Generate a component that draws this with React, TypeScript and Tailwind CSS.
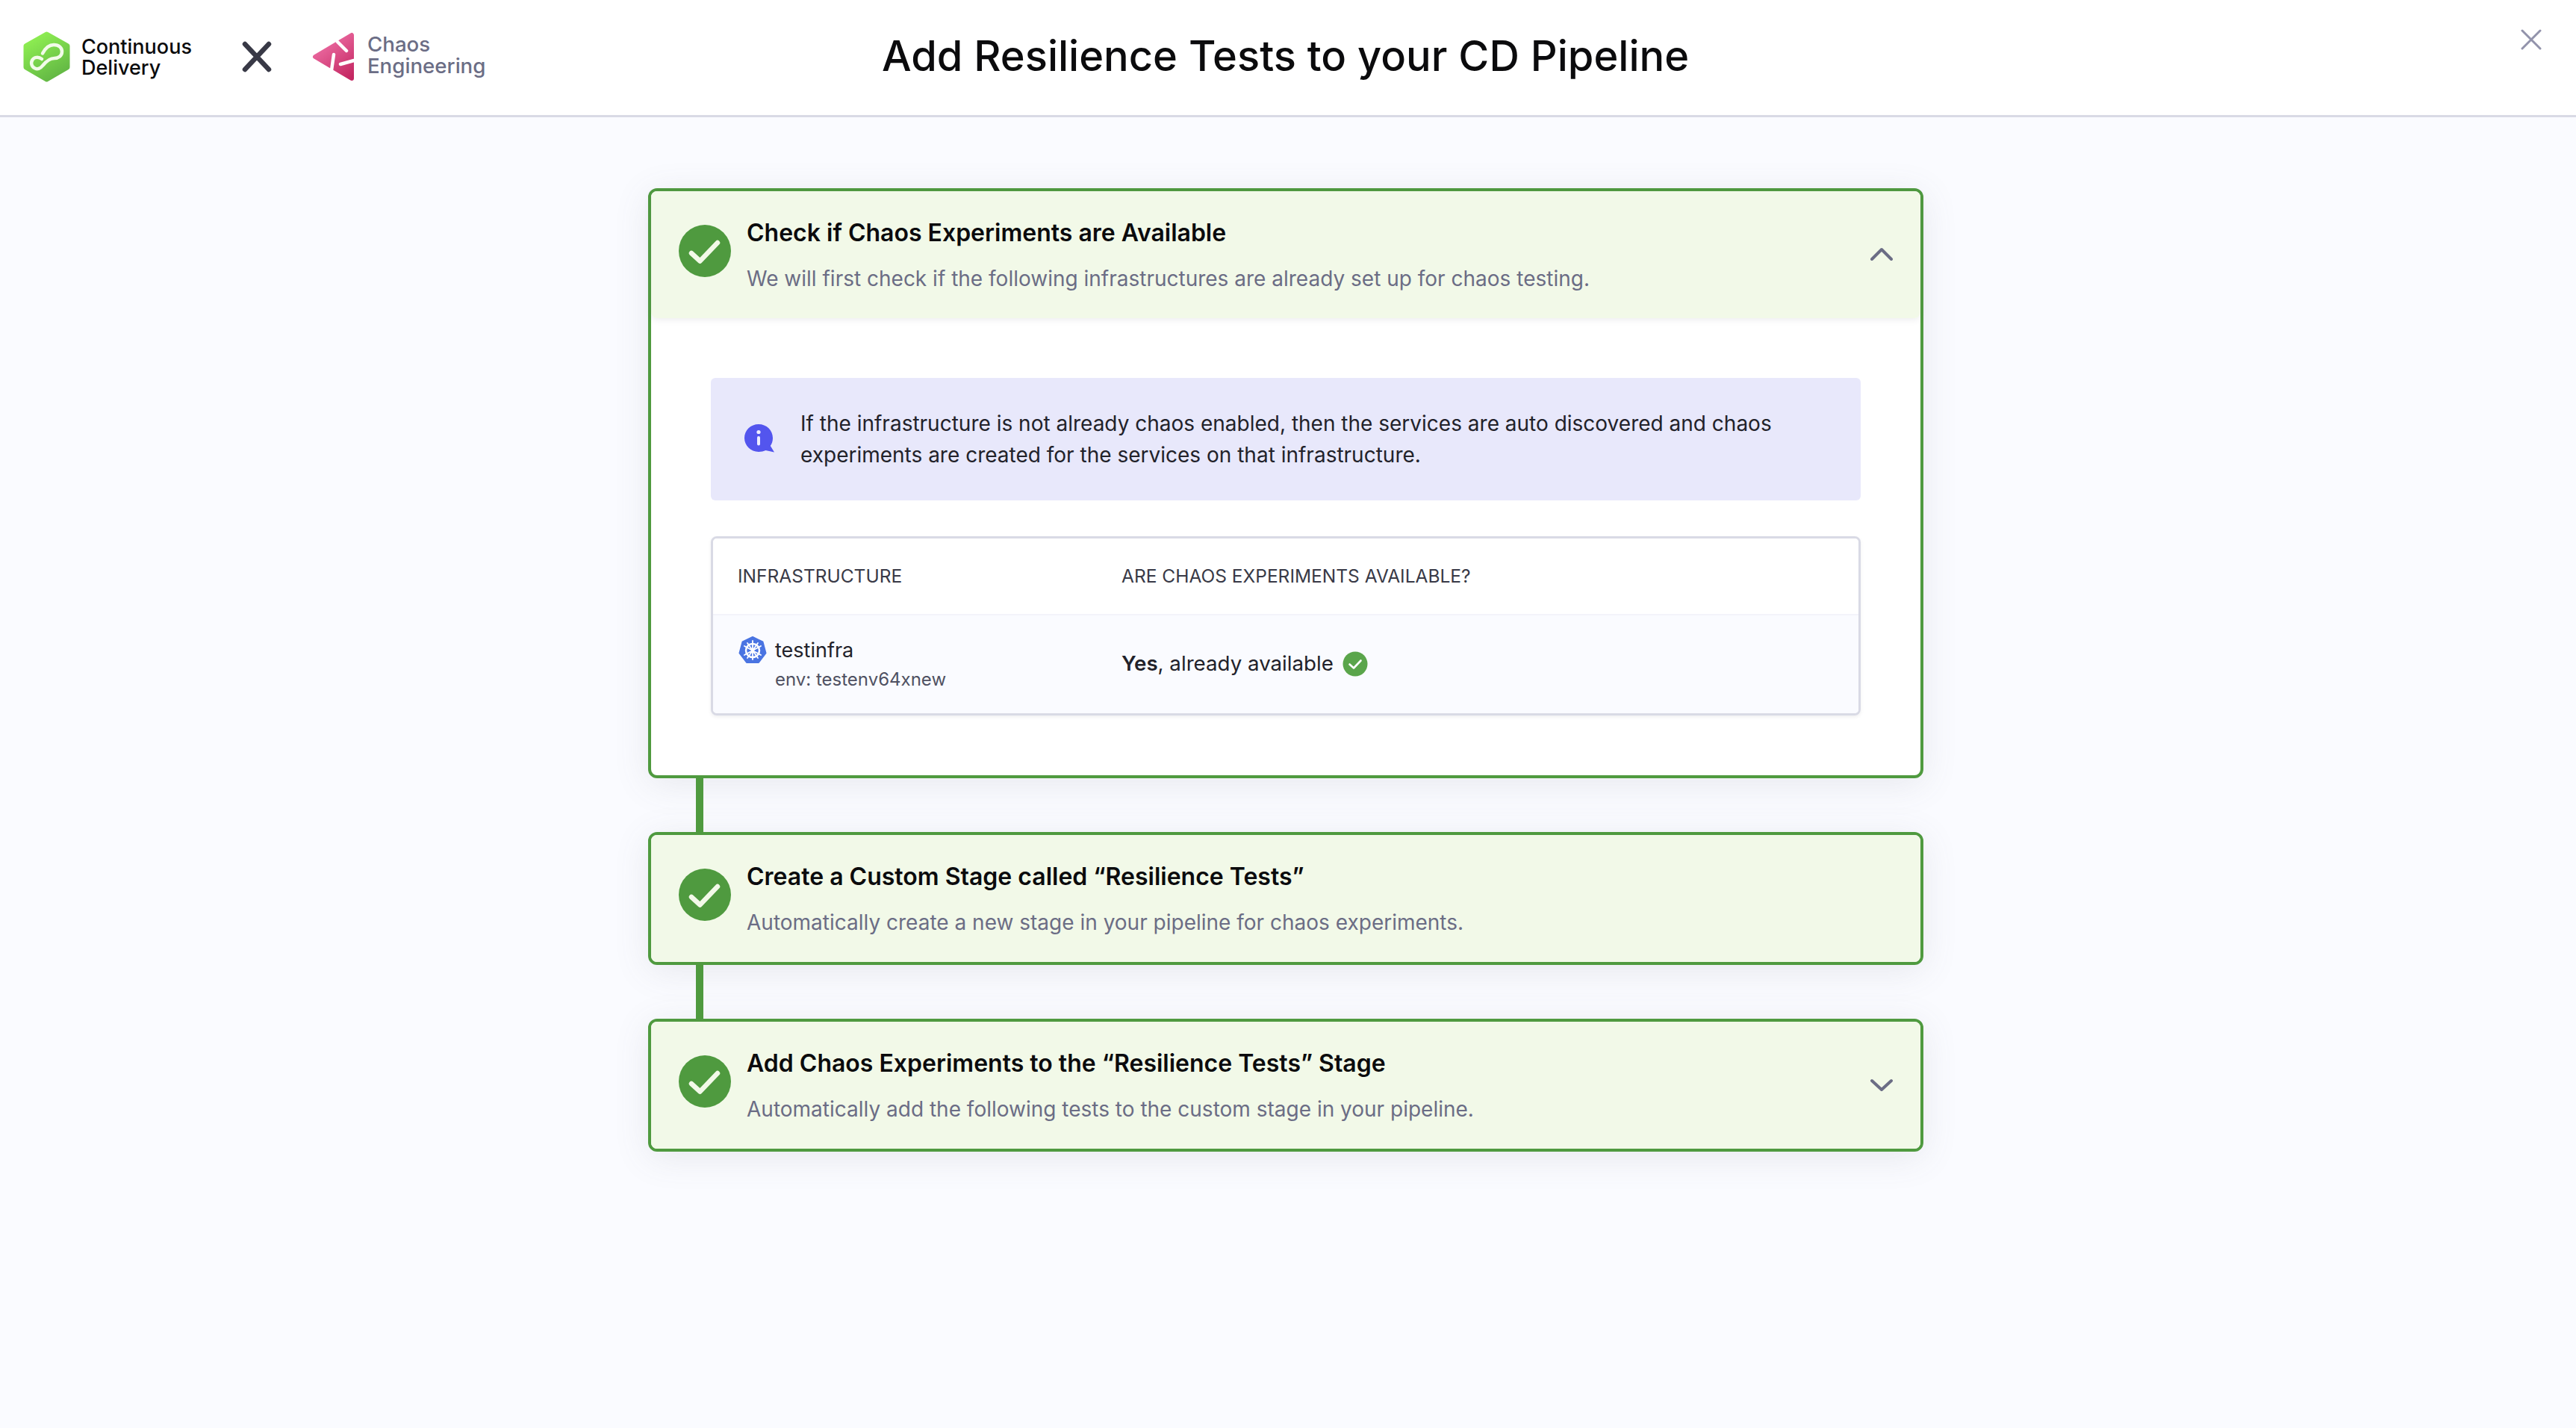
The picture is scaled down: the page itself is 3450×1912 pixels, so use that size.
import React from "react";

const font = "font-['Inter','Liberation_Sans',sans-serif]";

function CdLogo() {
  return (
    <svg width="63" height="68" viewBox="0 0 63 68" fill="none">
      <defs>
        <linearGradient id="cdg" x1="15" y1="5" x2="50" y2="65" gradientUnits="userSpaceOnUse">
          <stop offset="0" stopColor="#8fef52" />
          <stop offset="1" stopColor="#5fb343" />
        </linearGradient>
      </defs>
      <path
        d="M31.5 4 59 19.5V48L31.5 64 4 48V19.5Z"
        fill="url(#cdg)"
        stroke="url(#cdg)"
        strokeWidth="7"
        strokeLinejoin="round"
      />
      <path
        d="M26 29.5 C30 22 35 18 41 18 C48 18 52 22 52 27 C52 33 47 36 42 36 C35 36 30 41 26 46 C23 50 19 51 16 49.5 C11 47.5 10 42 12.5 38 C15 34 21 34 25 37"
        stroke="#f2fbe9"
        strokeWidth="4.5"
        strokeLinecap="round"
      />
    </svg>
  );
}

function ChaosLogo() {
  return (
    <svg width="58" height="66" viewBox="0 0 58 66" fill="none">
      <defs>
        <linearGradient id="ceg" x1="12" y1="10" x2="50" y2="62" gradientUnits="userSpaceOnUse">
          <stop offset="0" stopColor="#ee6fa5" />
          <stop offset="1" stopColor="#c42762" />
        </linearGradient>
      </defs>
      <path d="M4 33 53 4V62Z" fill="url(#ceg)" stroke="url(#ceg)" strokeWidth="6" strokeLinejoin="round" />
      <path d="M34 13 46 25M29 30 26 51M38 43 56 38" stroke="#fff" strokeWidth="4.5" strokeLinecap="round" />
    </svg>
  );
}

function K8sIcon() {
  return (
    <svg width="40" height="40" viewBox="0 0 40 40" fill="none">
      <path
        d="M20 2 33.5 8.5 37.5 23.5 28 36H12L2.500 23.500 6.500 8.500Z"
        fill="#4a74e2"
        stroke="#4a74e2"
        strokeWidth="2"
        strokeLinejoin="round"
      />
      <circle cx="20" cy="20" r="9" stroke="#fff" strokeWidth="2.500" />
      <path
        d="M20 7V32M9 14 31 26M31 14 9 26M13 30 27 10M27 30 13 10"
        stroke="#fff"
        strokeWidth="1.800"
        strokeLinecap="round"
      />
      <circle cx="20" cy="20" r="2.500" fill="#fff" />
    </svg>
  );
}

function InfoIcon() {
  return (
    <svg width="42" height="42" viewBox="0 0 42 42" fill="none">
      <path
        d="M20 1C30.500 1 39 9 39 19.500 39 23.500 37.800 27 35.800 30L41 38.500 29.500 36C26.800 37.300 23.500 38 20 38 9.500 38 1 29.500 1 19.500 1 9 9.500 1 20 1Z"
        fill="#5355ee"
      />
      <circle cx="20" cy="11.500" r="2.600" fill="#eef" />
      <rect x="18" y="17" width="4" height="12.500" rx="2" fill="#eef" />
    </svg>
  );
}

function BigCheck() {
  return (
    <svg width="70" height="70" viewBox="0 0 70 70" fill="none" className="shrink-0">
      <circle cx="35" cy="35" r="35" fill="#4f9a3f" />
      <path d="M17 38 28.500 48.500 52 24" stroke="#f2f9e8" strokeWidth="6.500" strokeLinecap="round" strokeLinejoin="round" />
    </svg>
  );
}

function SmallCheck() {
  return (
    <svg width="34" height="34" viewBox="0 0 34 34" fill="none" className="ml-3">
      <circle cx="17" cy="17" r="16.500" fill="#5aa54b" />
      <path d="M9.500 17.500 15 22.500 24.500 12.500" stroke="#fff" strokeWidth="2.600" strokeLinecap="round" strokeLinejoin="round" />
    </svg>
  );
}

function Chevron({ up }: { up?: boolean }) {
  return (
    <svg width="30" height="18" viewBox="0 0 30 18" fill="none">
      <path
        d={up ? "M2 16 15 3 28 16" : "M2 3 15 15 28 3"}
        stroke="#6b6d85"
        strokeWidth="4"
        strokeLinecap="round"
        strokeLinejoin="round"
      />
    </svg>
  );
}

function StepHead({ title, sub, chevron }: { title: string; sub: string; chevron?: "up" | "down" }) {
  return (
    <div className="flex h-[170px] items-start rounded-[8px] bg-[#f2f9e8] pl-[37px] pr-[37px]">
      <div className="mt-[45px]">
        <BigCheck />
      </div>
      <div className="ml-[21px] flex-1 pt-[34px]">
        <div className="text-[32px] leading-[44px] font-semibold text-[#0b0b0d]">{title}</div>
        <div className="mt-[17px] text-[28px] leading-[44px] text-[#6b6d85]">{sub}</div>
      </div>
      {chevron && (
        <div className={chevron === "up" ? "mt-[75px]" : "mt-[76px]"}>
          <Chevron up={chevron === "up"} />
        </div>
      )}
    </div>
  );
}

const cardCls =
  "rounded-[12px] border-4 border-[#4f9a3f] shadow-[0_8px_48px_rgba(96,97,112,0.12)]";

function Connector() {
  return <div className="relative z-10 ml-[64px] h-[72px] w-[10px] bg-[#4f9a3f]" />;
}

export default function App() {
  return (
    <div className={`${font} min-h-[1912px] bg-[#fafbff]`}>
      <header className="grid h-[157px] grid-cols-[1fr_auto_1fr] border-b-[3px] border-[#d9dae5] bg-white">
        <div className="flex items-center pb-[3px] pl-[31px]">
          <CdLogo />
          <div className="ml-[15px] mt-[3px] text-[27px] leading-[28px] font-medium text-[#0b0b0d]">
            Continuous
            <br />
            Delivery
          </div>
          <svg width="42" height="42" viewBox="0 0 42 42" fill="none" className="ml-[66px]">
            <path d="M5 4 37 38M37 4 5 38" stroke="#383946" strokeWidth="6.500" strokeLinecap="round" />
          </svg>
          <div className="ml-[53px]">
            <ChaosLogo />
          </div>
          <div className="mb-[3px] ml-[16px] text-[27.700px] leading-[29px] font-medium text-[#6b6d85]">
            Chaos
            <br />
            Engineering
          </div>
        </div>
        <h1 className="flex items-center pb-[4px] pr-[7px] text-[56px] font-medium text-[#0b0b0d]">
          Add Resilience Tests to your CD Pipeline
        </h1>
        <div className="flex justify-end pr-[46px] pt-[39px]">
          <svg width="28" height="28" viewBox="0 0 28 28" fill="none">
            <path d="M2 2 26 26M26 2 2 26" stroke="#9293ab" strokeWidth="3" strokeLinecap="round" />
          </svg>
        </div>
      </header>

      <main className="ml-[868px] w-[1708px] pt-[95px]">
        <section className={`${cardCls} bg-white`}>
          <div className="rounded-[8px] shadow-[0_2px_8px_rgba(96,97,112,0.12)]">
            <StepHead
              title="Check if Chaos Experiments are Available"
              sub="We will first check if the following infrastructures are already set up for chaos testing."
              chevron="up"
            />
          </div>
          <div className="p-[80px]">
            <div className="flex h-[164px] items-center rounded-[6px] bg-[#e8e8fb] pl-[44px] pr-[40px]">
              <InfoIcon />
              <p className="ml-[34px] text-[28px] leading-[42px] text-[#22222a]">
                If the infrastructure is not already chaos enabled, then the services are auto discovered and chaos
                <br />
                experiments are created for the services on that infrastructure.
              </p>
            </div>
            <div className="mt-[48px] h-[240px] overflow-hidden rounded-[8px] border-[3px] border-[#d9dae5] shadow-[0_2px_4px_rgba(96,97,112,0.1)]">
              <div className="flex h-[103px] items-center border-b-2 border-[#f3f3fa] bg-white pl-[33px] text-[24.500px] text-[#383946]">
                <div className="w-[514px]">INFRASTRUCTURE</div>
                <div>ARE CHAOS EXPERIMENTS AVAILABLE?</div>
              </div>
              <div className="flex h-[132px] items-center bg-[#fafbff] pl-[33px]">
                <div className="w-[514px]">
                  <div className="flex items-center">
                    <K8sIcon />
                    <span className="ml-[10px] text-[27px] leading-[40px] text-[#22222a]">testinfra</span>
                  </div>
                  <div className="pl-[50px] text-[24px] leading-[38px] text-[#4f5162]">env: testenv64xnew</div>
                </div>
                <div className="mb-[2px] flex items-center text-[27.700px] text-[#22222a]">
                  <span>
                    <span className="font-semibold">Yes</span>, already available
                  </span>
                  <SmallCheck />
                </div>
              </div>
            </div>
          </div>
        </section>

        <Connector />

        <section className={cardCls}>
          <StepHead
            title="Create a Custom Stage called “Resilience Tests”"
            sub="Automatically create a new stage in your pipeline for chaos experiments."
          />
        </section>

        <Connector />

        <section className={cardCls}>
          <StepHead
            title="Add Chaos Experiments to the “Resilience Tests” Stage"
            sub="Automatically add the following tests to the custom stage in your pipeline."
            chevron="down"
          />
        </section>
      </main>
    </div>
  );
}
